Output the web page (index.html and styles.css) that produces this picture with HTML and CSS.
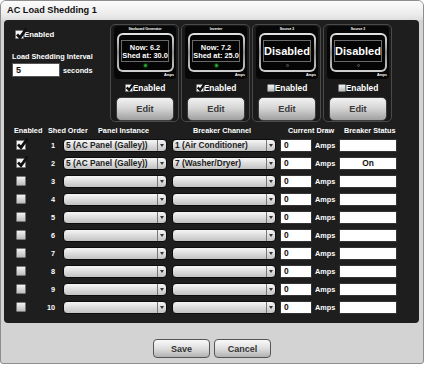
FILE: index.html
```html
<!DOCTYPE html>
<html lang="en">
<head>
    <meta charset="UTF-8" />
    <title>AC Load Shedding 1</title>
    <link rel="stylesheet" href="styles.css">
</head>
<body>
    <div class="window">
        <div class="titlebar">AC Load Shedding 1</div>

        <div class="panel">
            <div class="top">
                <div class="settings">
                    <div class="check-label main-enabled"><span class="cb checked"><svg viewBox="0 0 12 12"><path d="M2 6.5 L5 9.5 L11.5 0.5" /></svg></span>Enabled</div>
                    <div class="interval-label">Load Shedding Interval</div>
                    <div class="interval"><span class="field">5</span><span>seconds</span></div>
                </div>

                <div class="sources">
                    <div class="source">
                        <div class="meter">
                            <div class="meter-name">Starboard Generator</div>
                            <div class="screen">
                                <div class="screen-inner">
                                    <div class="readout">Now: 6.2<br>Shed at: 30.0</div>
                                    <span class="led on"></span>
                                </div>
                            </div>
                            <div class="unit">Amps</div>
                        </div>
                        <div class="check-label"><span class="cb checked"><svg viewBox="0 0 12 12"><path d="M2 6.5 L5 9.5 L11.5 0.5" /></svg></span>Enabled</div>
                        <button class="edit">Edit</button>
                    </div>
                    <div class="source">
                        <div class="meter">
                            <div class="meter-name">Inverter</div>
                            <div class="screen">
                                <div class="screen-inner">
                                    <div class="readout">Now: 7.2<br>Shed at: 25.0</div>
                                    <span class="led on"></span>
                                </div>
                            </div>
                            <div class="unit">Amps</div>
                        </div>
                        <div class="check-label"><span class="cb checked"><svg viewBox="0 0 12 12"><path d="M2 6.5 L5 9.5 L11.5 0.5" /></svg></span>Enabled</div>
                        <button class="edit">Edit</button>
                    </div>
                    <div class="source">
                        <div class="meter">
                            <div class="meter-name">Source 2</div>
                            <div class="screen">
                                <div class="screen-inner">
                                    <div class="readout disabled">Disabled</div>
                                    <span class="led"></span>
                                </div>
                            </div>
                            <div class="unit">Amps</div>
                        </div>
                        <div class="check-label"><span class="cb"></span>Enabled</div>
                        <button class="edit">Edit</button>
                    </div>
                    <div class="source">
                        <div class="meter">
                            <div class="meter-name">Source 3</div>
                            <div class="screen">
                                <div class="screen-inner">
                                    <div class="readout disabled">Disabled</div>
                                    <span class="led"></span>
                                </div>
                            </div>
                            <div class="unit">Amps</div>
                        </div>
                        <div class="check-label"><span class="cb"></span>Enabled</div>
                        <button class="edit">Edit</button>
                    </div>
                </div>
            </div>

            <div class="table-head">
                <span class="h-enabled">Enabled</span>
                <span class="h-order">Shed Order</span>
                <span class="h-panel">Panel Instance</span>
                <span class="h-breaker">Breaker Channel</span>
                <span class="h-draw">Current Draw</span>
                <span class="h-status">Breaker Status</span>
            </div>

            <div class="rows">
                <div class="row">
                    <span class="cb checked"><svg viewBox="0 0 12 12"><path d="M2 6.5 L5 9.5 L11.5 0.5" /></svg></span>
                    <span class="order">1</span>
                    <div class="select panel-sel"><span class="sel-text">5 (AC Panel (Galley))</span><span class="arrow"></span></div>
                    <div class="select breaker-sel"><span class="sel-text">1 (Air Conditioner)</span><span class="arrow"></span></div>
                    <span class="draw">0</span>
                    <span class="amps">Amps</span>
                    <span class="status"></span>
                </div>
                <div class="row">
                    <span class="cb checked"><svg viewBox="0 0 12 12"><path d="M2 6.5 L5 9.5 L11.5 0.5" /></svg></span>
                    <span class="order">2</span>
                    <div class="select panel-sel"><span class="sel-text">5 (AC Panel (Galley))</span><span class="arrow"></span></div>
                    <div class="select breaker-sel"><span class="sel-text">7 (Washer/Dryer)</span><span class="arrow"></span></div>
                    <span class="draw">0</span>
                    <span class="amps">Amps</span>
                    <span class="status">On</span>
                </div>
                <div class="row">
                    <span class="cb"></span>
                    <span class="order">3</span>
                    <div class="select panel-sel"><span class="sel-text"></span><span class="arrow"></span></div>
                    <div class="select breaker-sel"><span class="sel-text"></span><span class="arrow"></span></div>
                    <span class="draw">0</span>
                    <span class="amps">Amps</span>
                    <span class="status"></span>
                </div>
                <div class="row">
                    <span class="cb"></span>
                    <span class="order">4</span>
                    <div class="select panel-sel"><span class="sel-text"></span><span class="arrow"></span></div>
                    <div class="select breaker-sel"><span class="sel-text"></span><span class="arrow"></span></div>
                    <span class="draw">0</span>
                    <span class="amps">Amps</span>
                    <span class="status"></span>
                </div>
                <div class="row">
                    <span class="cb"></span>
                    <span class="order">5</span>
                    <div class="select panel-sel"><span class="sel-text"></span><span class="arrow"></span></div>
                    <div class="select breaker-sel"><span class="sel-text"></span><span class="arrow"></span></div>
                    <span class="draw">0</span>
                    <span class="amps">Amps</span>
                    <span class="status"></span>
                </div>
                <div class="row">
                    <span class="cb"></span>
                    <span class="order">6</span>
                    <div class="select panel-sel"><span class="sel-text"></span><span class="arrow"></span></div>
                    <div class="select breaker-sel"><span class="sel-text"></span><span class="arrow"></span></div>
                    <span class="draw">0</span>
                    <span class="amps">Amps</span>
                    <span class="status"></span>
                </div>
                <div class="row">
                    <span class="cb"></span>
                    <span class="order">7</span>
                    <div class="select panel-sel"><span class="sel-text"></span><span class="arrow"></span></div>
                    <div class="select breaker-sel"><span class="sel-text"></span><span class="arrow"></span></div>
                    <span class="draw">0</span>
                    <span class="amps">Amps</span>
                    <span class="status"></span>
                </div>
                <div class="row">
                    <span class="cb"></span>
                    <span class="order">8</span>
                    <div class="select panel-sel"><span class="sel-text"></span><span class="arrow"></span></div>
                    <div class="select breaker-sel"><span class="sel-text"></span><span class="arrow"></span></div>
                    <span class="draw">0</span>
                    <span class="amps">Amps</span>
                    <span class="status"></span>
                </div>
                <div class="row">
                    <span class="cb"></span>
                    <span class="order">9</span>
                    <div class="select panel-sel"><span class="sel-text"></span><span class="arrow"></span></div>
                    <div class="select breaker-sel"><span class="sel-text"></span><span class="arrow"></span></div>
                    <span class="draw">0</span>
                    <span class="amps">Amps</span>
                    <span class="status"></span>
                </div>
                <div class="row">
                    <span class="cb"></span>
                    <span class="order">10</span>
                    <div class="select panel-sel"><span class="sel-text"></span><span class="arrow"></span></div>
                    <div class="select breaker-sel"><span class="sel-text"></span><span class="arrow"></span></div>
                    <span class="draw">0</span>
                    <span class="amps">Amps</span>
                    <span class="status"></span>
                </div>
            </div>
        </div>

        <div class="footer">
            <button class="btn">Save</button>
            <button class="btn">Cancel</button>
        </div>
    </div>
</body>
</html>
```

FILE: styles.css
```css
/* AC load shedding dialog */

* {
    box-sizing: border-box;
}

body {
    margin: 0;
    background: #ffffff;
    font-family: "Liberation Sans", Arial, sans-serif;
    font-weight: bold;
}

.window {
    width: 424px;
    height: 364px;
    border: 1px solid #8e8e8e;
    border-radius: 6px 6px 3px 3px;
    background: #d3d3d3;
    overflow: hidden;
}

.titlebar {
    height: 19px;
    line-height: 19px;
    padding-left: 6px;
    font-size: 9.2px;
    color: #111;
    background: linear-gradient(#fcfcfc, #ececec 70%, #dedede);
}

.panel {
    margin-left: 3px;
    width: 415px;
    height: 303px;
    padding: 4px 0 0 8px;
    background: #1e1e1e;
    border-radius: 4px;
    color: #fff;
}

.top {
    display: flex;
}

/* left settings column */

.settings {
    width: 98px;
    font-size: 7.3px;
}

.check-label {
    display: flex;
    align-items: center;
}

.main-enabled {
    margin: 5px 0 0 3px;
    height: 10px;
    font-size: 7.8px;
}

.interval-label {
    margin-top: 13px;
    line-height: 10px;
}

.interval {
    display: flex;
    align-items: center;
    margin-top: 1px;
    gap: 3px;
}

.field {
    width: 48px;
    height: 14px;
    line-height: 12px;
    padding-left: 3px;
    background: #fff;
    border: 1px solid #555;
    color: #111;
    font-size: 9px;
}

/* checkboxes */

.cb {
    position: relative;
    display: inline-block;
    flex: none;
    width: 10px;
    height: 10px;
    border: 1px solid #777;
    border-radius: 1px;
    background: linear-gradient(#f2f2f2, #bdbdbd);
}

.cb.checked {
    background: #f7f7f7;
}

.cb svg {
    position: absolute;
    left: -1px;
    top: -3px;
    width: 12px;
    height: 12px;
    fill: none;
    stroke: #111;
    stroke-width: 2.8;
}

.main-enabled .cb {
    width: 9px;
    height: 9px;
}

.source .cb {
    width: 8px;
    height: 8px;
}

.source .cb svg {
    width: 10px;
    height: 10px;
}

/* source cards */

.sources {
    display: flex;
    gap: 2px;
}

.source {
    width: 69px;
    height: 98px;
    padding: 1px 2px 0 3px;
    border: 1px solid #4a4a4a;
    border-radius: 5px;
    background: #1a1a1a;
}

.meter {
    height: 53px;
    border-radius: 4px;
    background: #070707;
}

.meter-name {
    height: 7px;
    line-height: 7px;
    text-align: center;
    font-size: 3.4px;
}

.screen {
    width: 57px;
    height: 39px;
    margin: 0 auto;
    padding: 2px;
    border-radius: 6px;
    background: linear-gradient(#e6e6e6, #8a8a8a 50%, #d2d2d2);
}

.screen-inner {
    height: 100%;
    padding-top: 5px;
    border-radius: 4px;
    background: #050505;
    text-align: center;
}

.readout {
    width: 48px;
    height: 22px;
    margin: 0 auto;
    padding-top: 3px;
    border: 1px solid #6a6a6a;
    font-size: 7.4px;
    line-height: 8px;
    white-space: nowrap;
}

.readout.disabled {
    padding-top: 0;
    line-height: 20px;
    font-size: 11px;
}

.led {
    display: block;
    width: 3px;
    height: 3px;
    margin: 2px auto 0;
    border-radius: 50%;
    background: #111;
    border: 1px solid #5a5a5a;
}

.led.on {
    background: #2ecc40;
    border-color: #1e8a2a;
    box-shadow: 0 0 2px #3f3;
}

.unit {
    height: 6px;
    line-height: 6px;
    padding-right: 2px;
    text-align: right;
    font-size: 3.6px;
}

.source .check-label {
    height: 18px;
    justify-content: center;
    font-size: 8.4px;
}

.edit {
    display: block;
    width: 58px;
    height: 24px;
    margin: 0 auto;
    border: 1px solid #3c3c3c;
    border-radius: 5px;
    background: linear-gradient(#f2f2f2, #d6d6d6 45%, #a0a0a0);
    font-family: inherit;
    font-weight: bold;
    font-size: 9.2px;
    color: #3a3a3a;
}

/* breaker table */

.table-head {
    display: flex;
    margin-top: 4px;
    height: 10px;
    line-height: 10px;
    font-size: 7.3px;
}

.table-head span {
    padding-left: 2px;
}

.h-enabled { width: 34px; }
.h-order { width: 50px; }
.h-panel { width: 95px; }
.h-breaker { width: 95px; }
.h-draw { width: 56px; }

.row {
    display: flex;
    align-items: center;
    height: 18px;
    font-size: 7.3px;
}

.row .cb {
    margin-left: 4px;
}

.order {
    width: 29px;
    text-align: right;
}

.select {
    display: flex;
    width: 104px;
    height: 13px;
    border: 1px solid #0c0c0c;
    border-radius: 4px;
    background: linear-gradient(#f6f6f6, #dcdcdc 50%, #c2c2c2);
    color: #222;
    font-size: 8.3px;
    line-height: 11px;
}

.panel-sel {
    margin-left: 8px;
}

.breaker-sel {
    margin-left: 5px;
}

.sel-text {
    flex: 1;
    padding-left: 2px;
    white-space: nowrap;
    overflow: hidden;
}

.arrow {
    width: 9px;
    border-left: 1px solid #777;
    display: flex;
    align-items: center;
    justify-content: center;
}

.arrow::after {
    content: "";
    border-top: 3px solid #333;
    border-left: 2px solid transparent;
    border-right: 2px solid transparent;
}

.draw {
    width: 32px;
    height: 13px;
    margin-left: 4px;
    padding-left: 3px;
    line-height: 11px;
    background: #fff;
    border: 1px solid #333;
    color: #111;
    font-size: 8.4px;
}

.amps {
    width: 20px;
    margin-left: 3px;
}

.status {
    width: 58px;
    height: 13px;
    margin-left: 4px;
    line-height: 11px;
    background: #fff;
    border: 1px solid #333;
    color: #111;
    text-align: center;
    font-size: 8.4px;
}

/* footer buttons */

.footer {
    display: flex;
    justify-content: center;
    gap: 4px;
    padding-top: 16px;
}

.btn {
    width: 57px;
    height: 19px;
    border: 1px solid #555;
    border-radius: 4px;
    background: linear-gradient(#fafafa, #dedede 50%, #b2b2b2);
    font-family: inherit;
    font-weight: bold;
    font-size: 9px;
    color: #333;
}
```
